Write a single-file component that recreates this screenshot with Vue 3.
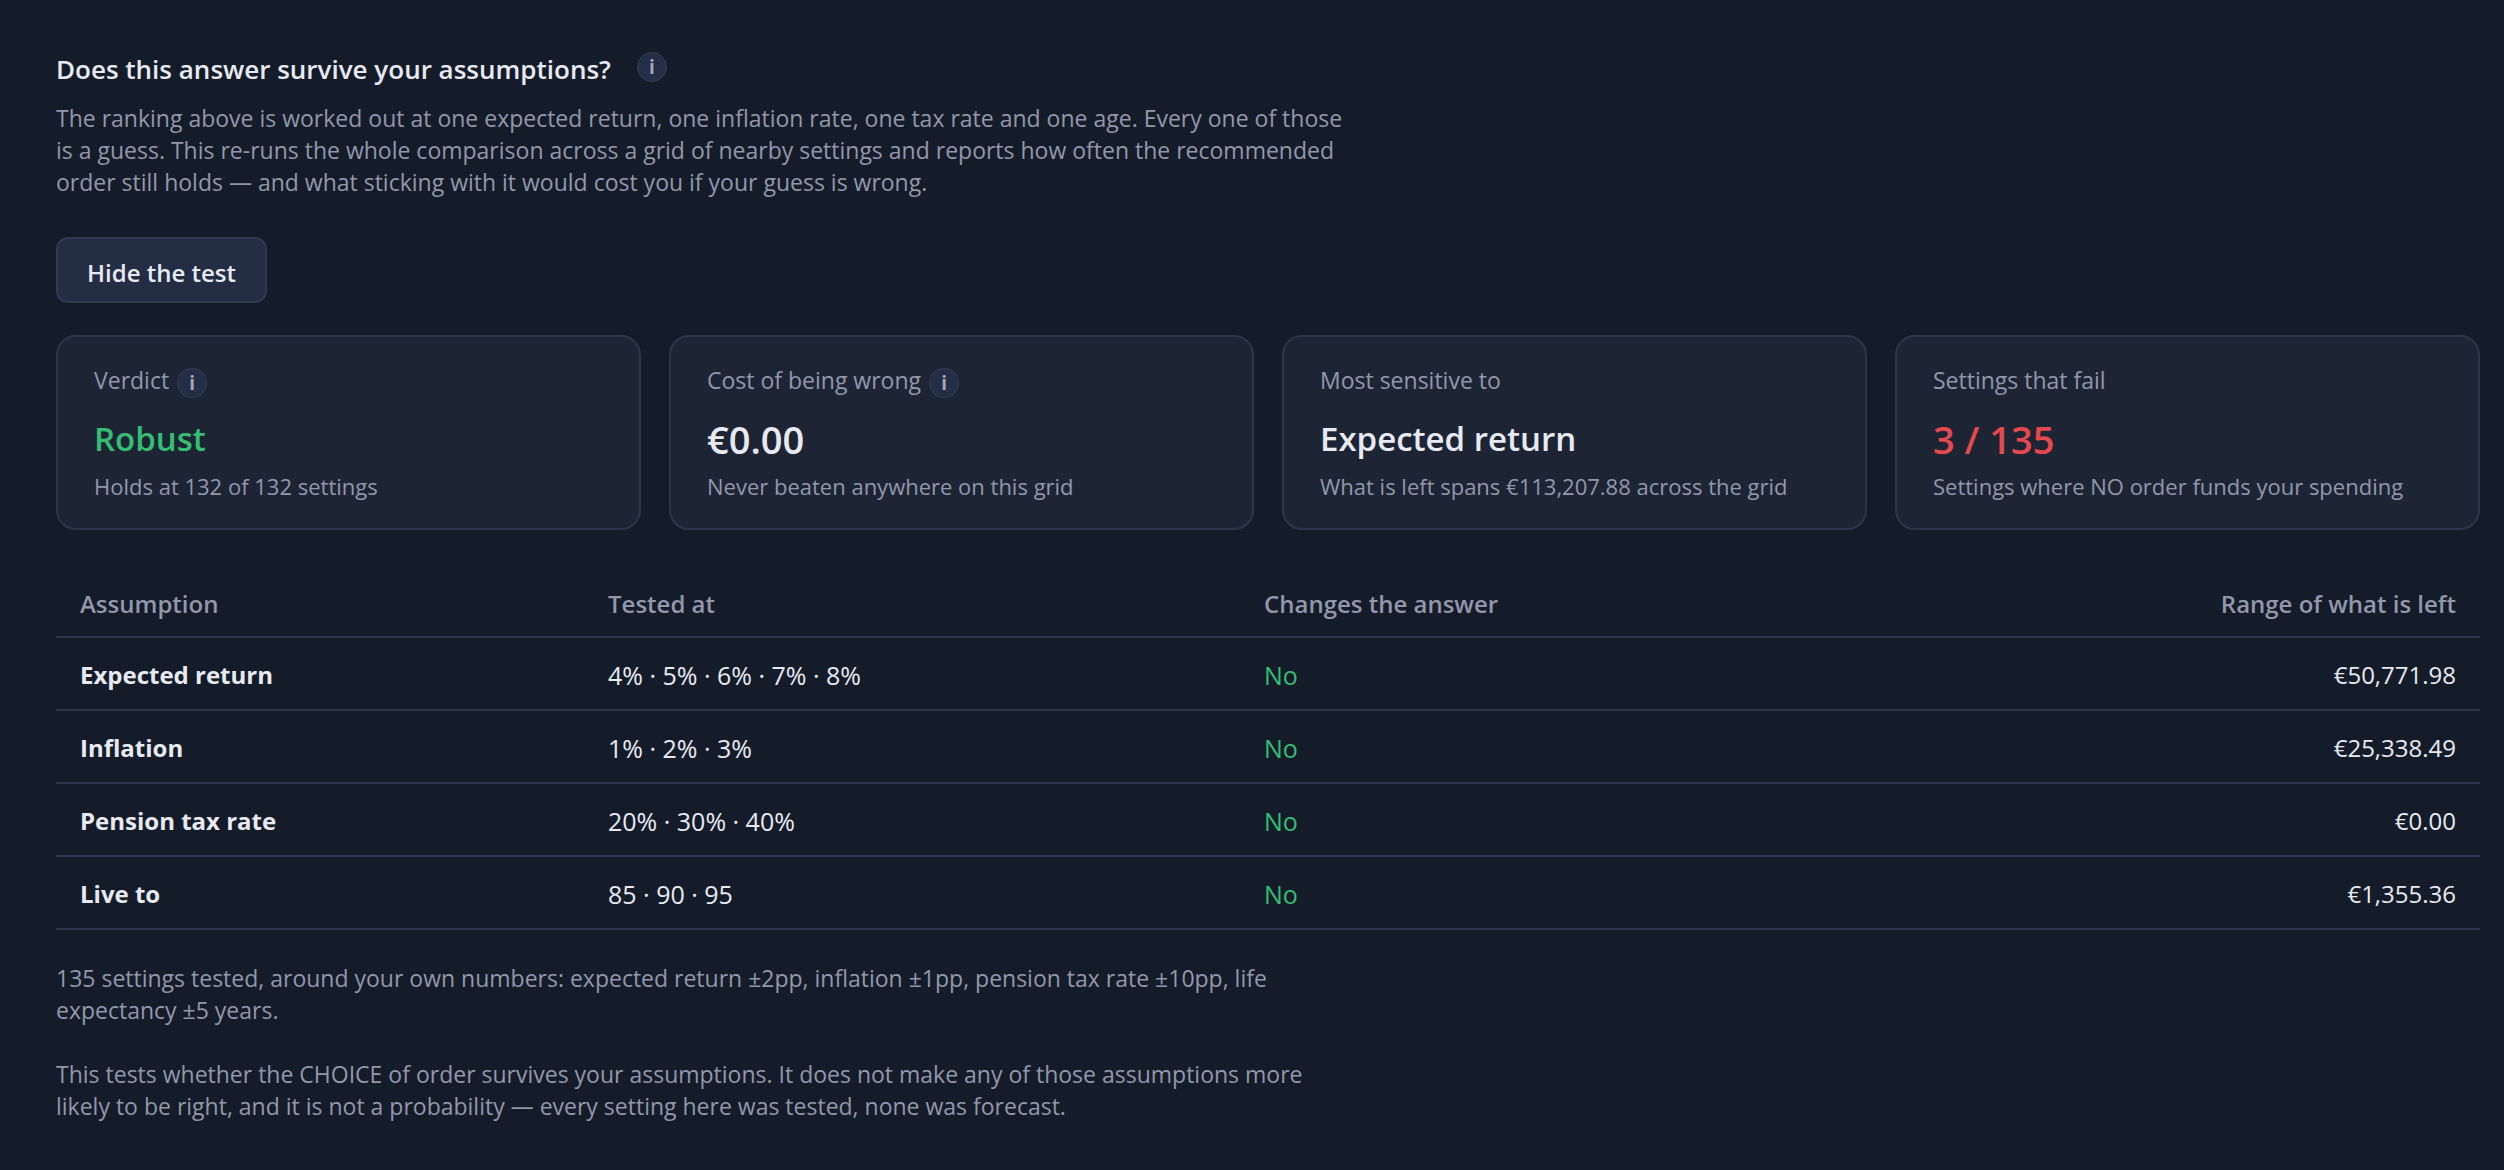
<script setup>
import { ref } from 'vue'

const open = ref(true)

const cards = [
  { label: 'Verdict', info: true, value: 'Robust', tone: 'good', sub: 'Holds at 132 of 132 settings' },
  { label: 'Cost of being wrong', info: true, value: '€0.00', tone: 'number', sub: 'Never beaten anywhere on this grid' },
  { label: 'Most sensitive to', value: 'Expected return', tone: '', sub: 'What is left spans €113,207.88 across the grid' },
  { label: 'Settings that fail', value: '3 / 135', tone: 'number bad', sub: 'Settings where NO order funds your spending' },
]

const rows = [
  { name: 'Expected return', tested: '4% · 5% · 6% · 7% · 8%', changes: 'No', range: '€50,771.98' },
  { name: 'Inflation', tested: '1% · 2% · 3%', changes: 'No', range: '€25,338.49' },
  { name: 'Pension tax rate', tested: '20% · 30% · 40%', changes: 'No', range: '€0.00' },
  { name: 'Live to', tested: '85 · 90 · 95', changes: 'No', range: '€1,355.36' },
]
</script>

<template>
  <section class="panel">
    <header class="heading">
      <h2>Does this answer survive your assumptions?</h2>
      <button type="button" class="info" aria-label="About this test">i</button>
    </header>
    <p class="note intro">
      The ranking above is worked out at one expected return, one inflation rate, one tax rate and one age. Every one of those
      is a guess. This re-runs the whole comparison across a grid of nearby settings and reports how often the recommended
      order still holds — and what sticking with it would cost you if your guess is wrong.
    </p>
    <button type="button" class="toggle" @click="open = !open">{{ open ? 'Hide the test' : 'Run the test' }}</button>

    <template v-if="open">
      <div class="cards">
        <article v-for="card in cards" :key="card.label" class="card">
          <div class="label">
            <span>{{ card.label }}</span>
            <button v-if="card.info" type="button" class="info" :aria-label="'About ' + card.label">i</button>
          </div>
          <div class="value" :class="card.tone">{{ card.value }}</div>
          <div class="sub">{{ card.sub }}</div>
        </article>
      </div>

      <table>
        <thead>
          <tr>
            <th scope="col" class="c-name">Assumption</th>
            <th scope="col" class="c-tested">Tested at</th>
            <th scope="col" class="c-changes">Changes the answer</th>
            <th scope="col" class="end">Range of what is left</th>
          </tr>
        </thead>
        <tbody>
          <tr v-for="row in rows" :key="row.name">
            <th scope="row">{{ row.name }}</th>
            <td class="setting">{{ row.tested }}</td>
            <td class="setting good">{{ row.changes }}</td>
            <td class="end">{{ row.range }}</td>
          </tr>
        </tbody>
      </table>

      <p class="note foot">
        135 settings tested, around your own numbers: expected return ±2pp, inflation ±1pp, pension tax rate ±10pp, life
        expectancy ±5 years.
      </p>
      <p class="note foot">
        This tests whether the CHOICE of order survives your assumptions. It does not make any of those assumptions more
        likely to be right, and it is not a probability — every setting here was tested, none was forecast.
      </p>
    </template>
  </section>
</template>

<style>
body {
  background: #151c29;
}
</style>

<style scoped>
.panel {
  box-sizing: border-box;
  padding: 52px 24px 48px 56px;
  color: #e8eaf3;
  font-family: "Open Sans", "Noto Sans", sans-serif;
  font-size: 24px;
  line-height: 32px;
}
.heading {
  display: flex;
  align-items: flex-start;
  gap: 26px;
}
h2 {
  margin: 0;
  font-size: 26px;
  font-weight: 600;
  line-height: 34px;
}
.info {
  box-sizing: border-box;
  width: 30px;
  height: 30px;
  padding: 0;
  border: 1px solid #353e57;
  border-radius: 50%;
  background: #252e47;
  color: #a3a8bd;
  font-family: inherit;
  font-size: 19px;
  font-weight: 700;
  line-height: 28px;
  text-align: center;
}
.note {
  max-width: 1300px;
  margin: 0;
  color: #9297ac;
  font-size: 23px;
}
.intro {
  margin-top: 16px;
}
.toggle {
  display: block;
  margin-top: 39px;
  padding: 18px 29px 12px;
  border: 2px solid #303952;
  border-radius: 12px;
  background: #232d44;
  color: #e8eaf3;
  font-family: inherit;
  font-size: 24px;
  font-weight: 600;
  line-height: 32px;
}
.cards {
  display: grid;
  grid-template-columns: repeat(4, 1fr);
  gap: 28px;
  margin-top: 32px;
}
.card {
  padding: 27px 36px 26px;
  border: 2px solid #2d3549;
  border-radius: 20px;
  background: #1d2535;
}
.label {
  display: flex;
  align-items: flex-end;
  height: 34px;
  gap: 8px;
  color: #9297ac;
  font-size: 23px;
}
.label span {
  align-self: flex-start;
}
.value {
  margin-top: 19px;
  font-size: 33px;
  font-weight: 600;
  line-height: 44px;
}
.number {
  font-size: 38px;
}
.good {
  color: #34bd73;
}
.bad {
  color: #e5484d;
}
.sub {
  margin-top: 9px;
  color: #9297ac;
  font-size: 22px;
}
table {
  width: 100%;
  margin-top: 41px;
  border-collapse: separate;
  border-spacing: 0;
}
th,
td {
  padding: 21px 24px 18px;
  border-bottom: 2px solid #2d3449;
  text-align: left;
}
thead th {
  padding: 17px 24px 16px;
  color: #9297ac;
  font-weight: 600;
}
tbody th {
  font-weight: 700;
}
.setting {
  font-size: 25px;
}
.c-name {
  width: 480px;
}
.c-tested {
  width: 608px;
}
.c-changes {
  width: 700px;
}
.end {
  text-align: right;
}
.foot {
  margin-top: 32px;
}
</style>
